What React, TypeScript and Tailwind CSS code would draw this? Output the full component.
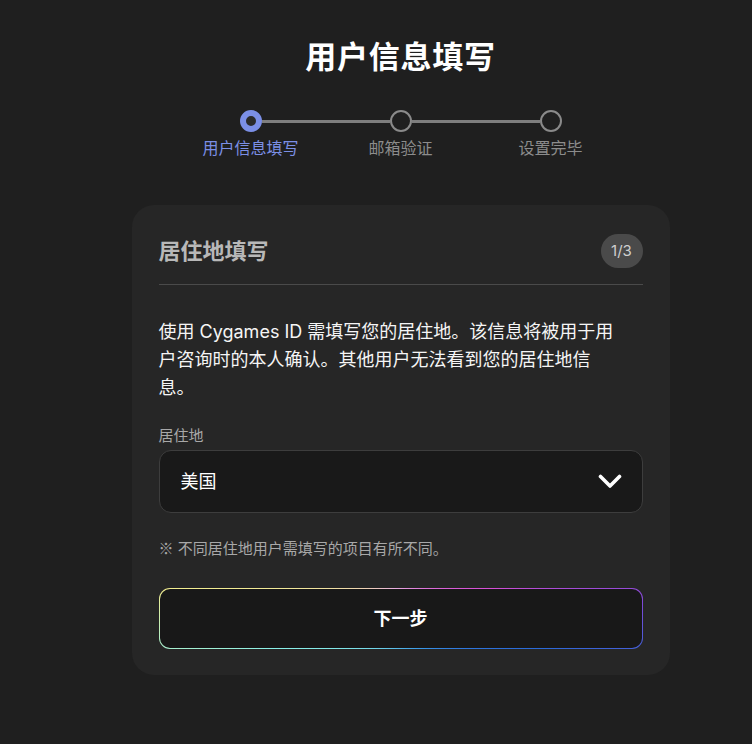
const steps = ['用户信息填写', '邮箱验证', '设置完毕'];

const font = { fontFamily: 'Inter, "Noto Sans CJK SC", sans-serif' };

const Stepper = () => (
  <div className="mt-[33px] flex w-[450px] flex-col">
    <div className="mx-[64px] flex items-center">
      <span className="h-[22px] w-[22px] shrink-0 rounded-full border-[6px] border-[#7b8fe6] bg-[#2a2a2a]" />
      <span className="h-[3px] flex-1 bg-[#7e7e7e]" />
      <span className="h-[22px] w-[22px] shrink-0 rounded-full border-2 border-[#8a8a8a]" />
      <span className="h-[3px] flex-1 bg-[#7e7e7e]" />
      <span className="h-[22px] w-[22px] shrink-0 rounded-full border-2 border-[#8a8a8a]" />
    </div>
    <div className="mt-[6px] flex text-[16px] leading-5">
      {steps.map((s, i) => (
        <span key={s} className={`w-[150px] text-center ${i === 0 ? 'text-[#7b8fe6]' : 'text-[#8c8c8c]'}`}>
          {s}
        </span>
      ))}
    </div>
  </div>
);

export default function App() {
  return (
    <div style={font} className="flex min-h-[744px] flex-col items-center bg-[#1f1f1f] pl-[49px] pt-[37px] text-white">
      <h1 className="text-[31px] font-bold leading-10 tracking-wide">用户信息填写</h1>
      <Stepper />

      <section className="mt-[47px] w-[538px] rounded-[22px] bg-[#262626] px-[27px] pb-[26px] pt-[28px]">
        <div className="flex items-center justify-between border-b border-[#4a4a4a] pb-[15px]">
          <h2 className="text-[22px] font-bold leading-9 text-[#b8b8b8]">居住地填写</h2>
          <span className="flex h-[34px] w-[42px] items-center justify-center rounded-full bg-[#4a4a4a] text-[15px] text-[#cfcfcf]">
            1/3
          </span>
        </div>

        <p className="mt-[33px] pr-[25px] text-[18px] leading-[28px] text-[#f5f5f5]">
          使用 Cygames ID 需填写您的居住地。该信息将被用于用户咨询时的本人确认。其他用户无法看到您的居住地信息。
        </p>

        <label className="mt-[24px] block text-[15px] leading-5 text-[#a8a8a8]">居住地</label>
        <div className="mt-[4px] flex h-[63px] items-center justify-between rounded-[12px] border border-[#3d3d3d] bg-[#191919] pl-[21px] pr-[20px]">
          <span className="text-[18px]">美国</span>
          <svg width="24" height="15" viewBox="0 0 24 15" fill="none">
            <polyline points="2.5,2.5 12,12 21.5,2.5" stroke="white" strokeWidth="3.6" strokeLinecap="round" strokeLinejoin="round" />
          </svg>
        </div>

        <p className="mt-[25px] text-[15px] leading-5 text-[#a8a8a8]">
          <span style={{ fontFamily: '"Noto Sans CJK SC", sans-serif' }}>※</span> 不同居住地用户需填写的项目有所不同。
        </p>

        <div className="mt-[29px] rounded-[11px] bg-[conic-gradient(from_277deg,#f2ee90_0deg,#e8b0e0_70deg,#d64fd6_155deg,#7a4ad8_170deg,#2a6ad8_185deg,#3a9ae8_230deg,#8af0e8_340deg,#f2ee90_360deg)] p-px">
          <button className="flex h-[59px] w-full items-center justify-center rounded-[10px] bg-[#181818] text-[18px] font-bold text-white">
            下一步
          </button>
        </div>
      </section>
    </div>
  );
}
